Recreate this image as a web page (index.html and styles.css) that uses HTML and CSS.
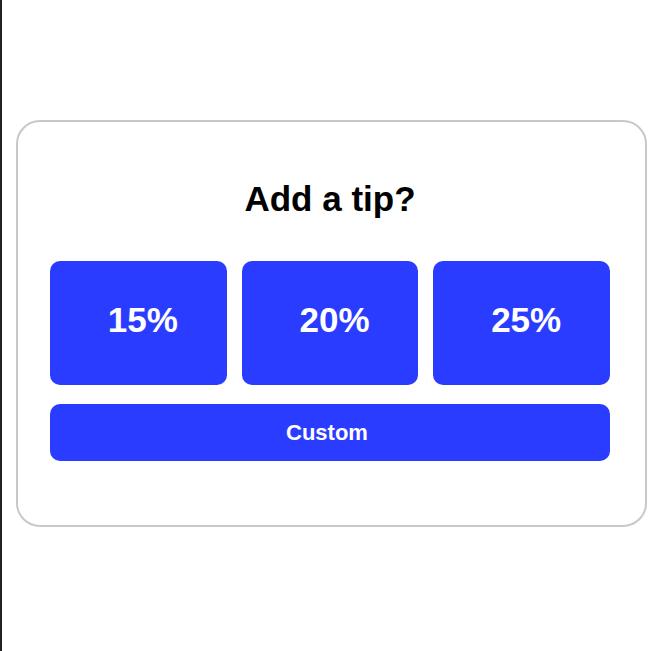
FILE: index.html
```html
<!DOCTYPE html>
<html>
<head>
<meta charset="utf-8">
<link rel="stylesheet" href="styles.css">
</head>
<body>
<div class="page">
  <div class="card">
    <h1 class="title">Add a tip?</h1>
    <div class="options">
      <button class="opt">15%</button>
      <button class="opt">20%</button>
      <button class="opt">25%</button>
    </div>
    <button class="custom">Custom</button>
  </div>
</div>
</body>
</html>
```

FILE: styles.css
```css
html, body {
  margin: 0;
  padding: 0;
  background: #fff;
}
.page {
  box-sizing: border-box;
  min-height: 651px;
  border-left: 2px solid #222;
  padding: 120px 0 0 14px;
  font-family: "Liberation Sans", Arial, sans-serif;
}
.card {
  box-sizing: border-box;
  width: 631px;
  height: 407px;
  border: 2px solid #c8c8c8;
  border-radius: 24px;
  padding: 57px 35px 0 32px;
  display: flex;
  flex-direction: column;
}
.title {
  margin: 0 0 42px;
  font-size: 35px;
  line-height: 40px;
  font-weight: 700;
  color: #000;
  text-align: center;
}
.options {
  display: grid;
  grid-template-columns: repeat(3, 1fr);
  gap: 15px;
  margin-bottom: 19px;
}
.opt, .custom {
  border: none;
  background: #2a3cff;
  color: #fff;
  font-family: "Liberation Sans", Arial, sans-serif;
  font-weight: 700;
  cursor: pointer;
}
.opt {
  height: 124px;
  border-radius: 10px;
  font-size: 35px;
  padding: 0 0 6px 9px;
}
.custom {
  height: 57px;
  border-radius: 10px;
  font-size: 22px;
  padding: 0 6px 0 0;
}
```
